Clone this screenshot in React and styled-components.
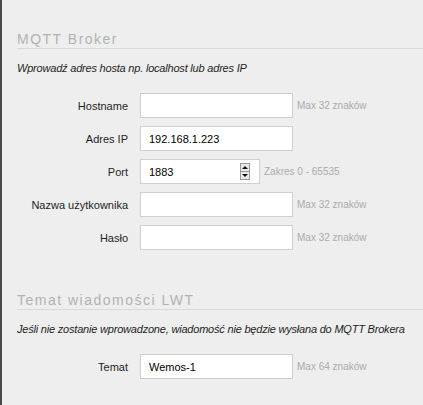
import styled, { createGlobalStyle } from "styled-components";

const GlobalStyle = createGlobalStyle`
  html, body {
    margin: 0;
    padding: 0;
    background: #eeeeee;
  }
  body {
    font-family: "Liberation Sans", Arial, sans-serif;
  }
`;

const Page = styled.div`
  min-height: 405px;
  box-sizing: border-box;
  border-left: 2px solid #4a4a4a;
  padding: 31px 0 0 15px;
  background: #eeeeee;
`;

const Section = styled.section`
  & + & {
    margin-top: 42px;
  }
`;

const Heading = styled.h2`
  margin: 0;
  font-size: 14px;
  line-height: 17px;
  font-weight: normal;
  letter-spacing: 1.5px;
  color: #b2b2b2;
  border-bottom: 1px solid #d9d9d9;
`;

const Description = styled.p`
  margin: 13px 0 18px;
  font-size: 11px;
  line-height: 13px;
  font-style: italic;
  letter-spacing: -0.2px;
  color: #1e1e1e;
  white-space: nowrap;
`;

const Fields = styled.div`
  display: flex;
  flex-direction: column;
  gap: 8px;
`;

const Row = styled.div`
  display: grid;
  grid-template-columns: 111px auto auto;
  justify-content: start;
  align-items: center;
  column-gap: 12px;
  height: 25px;
`;

const Label = styled.label`
  text-align: right;
  font-size: 11px;
  color: #1e1e1e;
`;

const Control = styled.div`
  display: flex;
  align-items: center;
  gap: 4px;
`;

const TextInput = styled.input`
  box-sizing: border-box;
  width: ${(p) => p.$width || 153}px;
  height: 25px;
  padding: 0 8px;
  border: 1px solid #cfcfcf;
  background: #ffffff;
  font-family: "Liberation Sans", Arial, sans-serif;
  font-size: 11px;
  color: #000;
  outline: none;
`;

const NumberBox = styled.div`
  box-sizing: border-box;
  width: 120px;
  height: 25px;
  display: flex;
  align-items: center;
  padding: 0 9px 0 0;
  border: 1px solid #cfcfcf;
  background: #ffffff;
`;

const NumberInput = styled.input`
  flex: 1;
  min-width: 0;
  height: 100%;
  padding: 0 8px;
  border: none;
  background: transparent;
  font-family: "Liberation Sans", Arial, sans-serif;
  font-size: 11px;
  color: #000;
  outline: none;
`;

const Spinner = styled.div`
  display: flex;
  flex-direction: column;
  width: 10px;
  height: 17px;
  border: 1px solid #9a9a9a;
  background: #e8e8e8;
  box-sizing: border-box;
`;

const SpinHalf = styled.div`
  flex: 1;
  display: flex;
  align-items: center;
  justify-content: center;
  & + & {
    border-top: 1px solid #9a9a9a;
  }
  &::after {
    content: "";
    border-left: 3px solid transparent;
    border-right: 3px solid transparent;
    ${(p) =>
      p.$up
        ? "border-bottom: 3px solid #111;"
        : "border-top: 3px solid #111;"}
  }
`;

const Hint = styled.span`
  font-size: 10px;
  color: #ababab;
  white-space: nowrap;
`;

const brokerFields = [
  { label: "Hostname", value: "", hint: "Max 32 znaków" },
  { label: "Adres IP", value: "192.168.1.223" },
  { label: "Port", value: "1883", hint: "Zakres 0 - 65535", number: true },
  { label: "Nazwa użytkownika", value: "", hint: "Max 32 znaków" },
  { label: "Hasło", value: "", hint: "Max 32 znaków" },
];

function Field({ label, value, hint, number }) {
  return (
    <Row>
      <Label>{label}</Label>
      <Control>
        {number ? (
          <NumberBox>
            <NumberInput defaultValue={value} />
            <Spinner>
              <SpinHalf $up />
              <SpinHalf />
            </Spinner>
          </NumberBox>
        ) : (
          <TextInput defaultValue={value} />
        )}
        {hint && <Hint>{hint}</Hint>}
      </Control>
    </Row>
  );
}

export default function App() {
  return (
    <>
      <GlobalStyle />
      <Page>
        <Section>
          <Heading>MQTT Broker</Heading>
          <Description>Wprowadź adres hosta np. localhost lub adres IP</Description>
          <Fields>
            {brokerFields.map((f) => (
              <Field key={f.label} {...f} />
            ))}
          </Fields>
        </Section>
        <Section>
          <Heading>Temat wiadomości LWT</Heading>
          <Description>
            Jeśli nie zostanie wprowadzone, wiadomość nie będzie wysłana do MQTT
            Brokera
          </Description>
          <Fields>
            <Field label="Temat" value="Wemos-1" hint="Max 64 znaków" />
          </Fields>
        </Section>
      </Page>
    </>
  );
}
